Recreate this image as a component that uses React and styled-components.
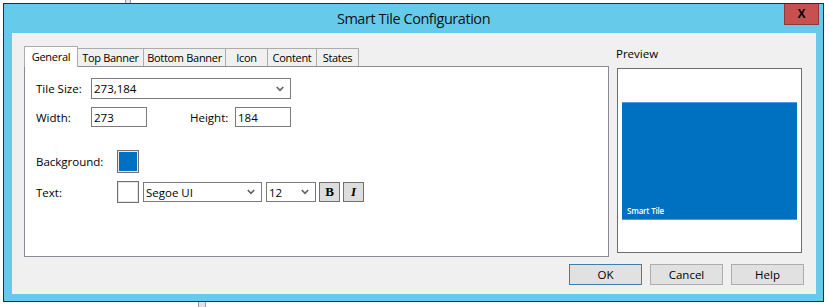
import React from "react";
import styled, { createGlobalStyle } from "styled-components";

const Global = createGlobalStyle`
  html, body { margin: 0; padding: 0; background: #ffffff; }
  body { font-family: "Open Sans", "Noto Sans", sans-serif; font-size: 12px; color: #000; }
  * { box-sizing: border-box; }
`;

const Desktop = styled.div`
  position: relative;
  width: 829px;
  height: 307px;
  overflow: hidden;
  padding: 3px 0 0 3px;
`;

const BackBar = styled.div`
  position: absolute;
  left: ${(p) => p.$x}px;
  top: ${(p) => p.$y}px;
  width: ${(p) => p.$w}px;
  height: ${(p) => p.$h}px;
  background: #dfe1ea;
  border: 1px solid #9a9aa6;
`;

const Window = styled.div`
  position: relative;
  width: 821px;
  height: 299px;
  border: 1px solid #2b2b2b;
  background: #66cbea;
  display: flex;
  flex-direction: column;
`;

const TitleBar = styled.div`
  height: 29px;
  display: grid;
  grid-template-columns: 1fr auto 1fr;
  align-items: start;
`;

const Title = styled.div`
  grid-column: 2;
  align-self: center;
  font-family: "Open Sans", sans-serif;
  font-size: 14.5px;
  letter-spacing: -0.45px;
  color: #111;
  line-height: 18px;
  padding-top: 1px;
`;

const CloseButton = styled.div`
  grid-column: 3;
  justify-self: end;
  margin-right: 4px;
  width: 35px;
  height: 21px;
  background: #c75050;
  border: 1px solid #8b3a3a;
  border-top: none;
  display: flex;
  align-items: center;
  justify-content: center;
  font-family: "Liberation Sans", sans-serif;
  font-weight: bold;
  font-size: 12px;
  color: #000;
`;

const Client = styled.div`
  margin: 0 7px 7px 8px;
  height: 261px;
  background: #f0f0f0;
  padding: 13px 12px 0 12px;
  display: flex;
  flex-direction: column;
`;

const TopRow = styled.div`
  display: flex;
  align-items: flex-start;
`;

const TabsColumn = styled.div`
  width: 585px;
  display: flex;
  flex-direction: column;
`;

const TabStrip = styled.div`
  display: flex;
  align-items: flex-start;
  height: 21px;
  margin-bottom: -1px;
  position: relative;
  z-index: 1;
`;

const Tab = styled.div`
  width: ${(p) => p.$w}px;
  height: ${(p) => (p.$active ? 21 : 18)}px;
  margin-top: ${(p) => (p.$active ? 0 : 2)}px;
  background: ${(p) => (p.$active ? "#ffffff" : "#f0f0f0")};
  border: 1px solid #acacac;
  border-bottom: none;
  border-left: ${(p) => (p.$first ? "1px solid #acacac" : "none")};
  display: flex;
  justify-content: center;
  align-items: ${(p) => (p.$active ? "flex-start" : "center")};
  padding-top: ${(p) => (p.$active ? 2 : 0)}px;
  font-size: 11px;
  letter-spacing: -0.3px;
  line-height: 16px;
  white-space: nowrap;
`;

const Panel = styled.div`
  height: 191px;
  background: #fff;
  border: 1px solid #898c95;
  padding: 11px 0 0 11px;
  display: flex;
  flex-direction: column;
`;

const Row = styled.div`
  display: flex;
  align-items: center;
  margin-top: ${(p) => p.$mt || 0}px;
  height: ${(p) => p.$h}px;
`;

const Label = styled.div`
  width: ${(p) => p.$w}px;
  margin-left: ${(p) => p.$ml || 0}px;
  font-size: 11.5px;
  white-space: nowrap;
`;

const Field = styled.div`
  width: ${(p) => p.$w}px;
  height: ${(p) => p.$h || 20}px;
  margin-left: ${(p) => p.$ml || 0}px;
  border: 1px solid #7a7a7a;
  background: #fff;
  display: flex;
  align-items: center;
  justify-content: space-between;
  padding: 0 6px 0 2px;
  font-size: 11.5px;
`;

const Swatch = styled.div`
  width: 22px;
  height: ${(p) => p.$h}px;
  margin-left: ${(p) => p.$ml || 0}px;
  border: 1px solid #707070;
  background: #e6e6e6;
  padding: 1px;
  &::after {
    content: "";
    display: block;
    width: 100%;
    height: 100%;
    background: ${(p) => p.$color};
  }
`;

const StyleButton = styled.div`
  width: 21px;
  height: 20px;
  margin-left: ${(p) => p.$ml || 0}px;
  border: 1px solid #707070;
  background: #dddddd;
  display: flex;
  align-items: center;
  justify-content: center;
  font-family: "Liberation Serif", serif;
  font-weight: bold;
  font-style: ${(p) => (p.$italic ? "italic" : "normal")};
  font-size: 13px;
`;

const PreviewColumn = styled.div`
  margin-left: 8px;
  display: flex;
  flex-direction: column;
`;

const PreviewLabel = styled.div`
  margin-left: -1px;
  line-height: 16px;
  font-size: 11.5px;
`;

const PreviewBox = styled.div`
  margin-top: 6px;
  width: 185px;
  height: 185px;
  border: 1px solid #6e6e6e;
  background: #fff;
  display: flex;
  align-items: center;
  justify-content: center;
`;

const Tile = styled.div`
  width: 175px;
  height: 118px;
  background: #0070c0;
  border-top: 1px solid #4d9ee6;
  border-bottom: 1px solid #4d9ee6;
  display: flex;
  align-items: flex-end;
  padding: 0 0 3px 5px;
  color: #fff;
  font-size: 8px;
  font-weight: 600;
  letter-spacing: -0.2px;
`;

const ButtonRow = styled.div`
  margin-top: 7px;
  display: flex;
  justify-content: flex-end;
  gap: 8px;
`;

const DialogButton = styled.div`
  width: 73px;
  height: 21px;
  border: 1px solid ${(p) => (p.$default ? "#3c7fb1" : "#adadad")};
  background: #e1e1e1;
  display: flex;
  align-items: center;
  justify-content: center;
  font-size: 11.5px;
`;

const Chevron = () => (
  <svg width="8" height="6" viewBox="0 0 8 6">
    <path d="M0.8 1 L4 4.4 L7.2 1" fill="none" stroke="#606060" strokeWidth="1.6" />
  </svg>
);

const tabs = [
  { name: "General", w: 54, active: true },
  { name: "Top Banner", w: 66 },
  { name: "Bottom Banner", w: 82 },
  { name: "Icon", w: 42 },
  { name: "Content", w: 49 },
  { name: "States", w: 42 },
];

export default function App() {
  return (
    <>
      <Global />
      <Desktop>
        <BackBar $x={125} $y={-2} $w={6} $h={6} />
        <BackBar $x={198} $y={301} $w={8} $h={8} />
        <Window>
          <TitleBar>
            <Title>Smart Tile Configuration</Title>
            <CloseButton>X</CloseButton>
          </TitleBar>
          <Client>
            <TopRow>
              <TabsColumn>
                <TabStrip>
                  {tabs.map((t, i) => (
                    <Tab key={t.name} $w={t.w} $active={t.active} $first={i === 0}>
                      {t.name}
                    </Tab>
                  ))}
                </TabStrip>
                <Panel>
                  <Row $h={21}>
                    <Label $w={55}>Tile Size:</Label>
                    <Field $w={200} $h={21}>
                      <span>273,184</span>
                      <Chevron />
                    </Field>
                  </Row>
                  <Row $h={20} $mt={8}>
                    <Label $w={55}>Width:</Label>
                    <Field $w={56}>273</Field>
                    <Label $w={45} $ml={43}>Height:</Label>
                    <Field $w={56}>184</Field>
                  </Row>
                  <Row $h={23} $mt={23}>
                    <Label $w={81}>Background:</Label>
                    <Swatch $h={23} $color="#0070c0" />
                  </Row>
                  <Row $h={22} $mt={8}>
                    <Label $w={81}>Text:</Label>
                    <Swatch $h={22} $color="#ffffff" />
                    <Field $w={119} $ml={4}>
                      <span>Segoe UI</span>
                      <Chevron />
                    </Field>
                    <Field $w={50} $ml={4}>
                      <span>12</span>
                      <Chevron />
                    </Field>
                    <StyleButton $ml={3}>B</StyleButton>
                    <StyleButton $ml={3} $italic>I</StyleButton>
                  </Row>
                </Panel>
              </TabsColumn>
              <PreviewColumn>
                <PreviewLabel>Preview</PreviewLabel>
                <PreviewBox>
                  <Tile>Smart Tile</Tile>
                </PreviewBox>
              </PreviewColumn>
            </TopRow>
            <ButtonRow>
              <DialogButton $default>OK</DialogButton>
              <DialogButton>Cancel</DialogButton>
              <DialogButton>Help</DialogButton>
            </ButtonRow>
          </Client>
        </Window>
      </Desktop>
    </>
  );
}
